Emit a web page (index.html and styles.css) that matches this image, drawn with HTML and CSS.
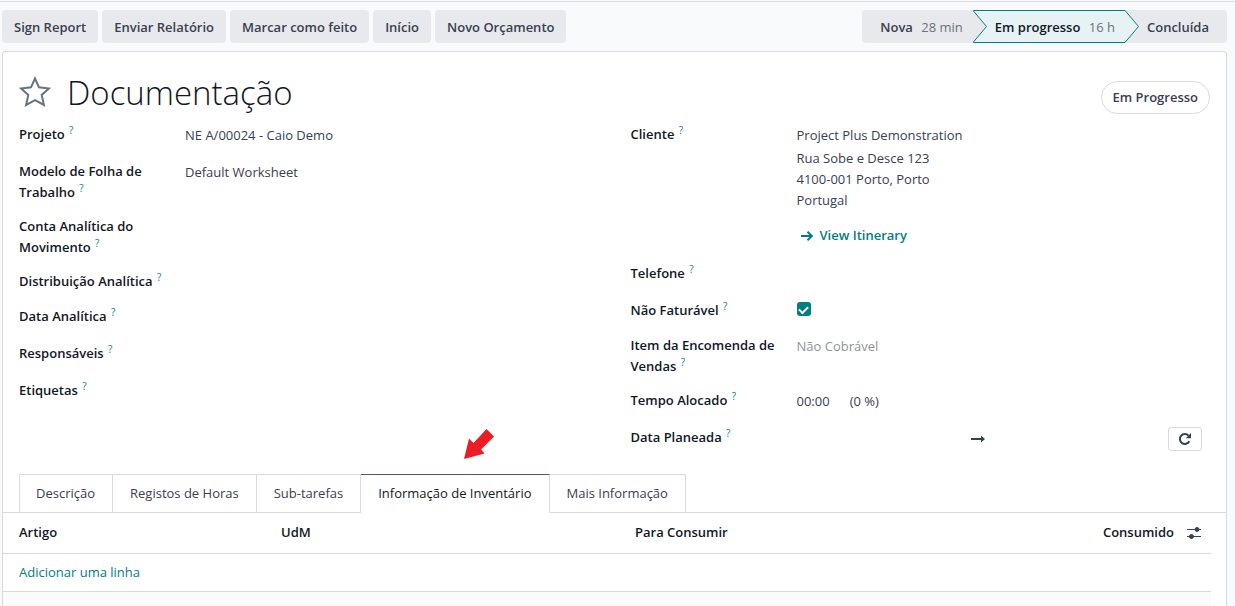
FILE: index.html
```html
<!DOCTYPE html>
<html lang="pt">
<head>
<meta charset="utf-8">
<title>Documentação</title>
<link rel="stylesheet" href="styles.css">
</head>
<body>
<header class="control-bar">
  <div class="actions">
    <button class="btn" type="button">Sign Report</button>
    <button class="btn" type="button">Enviar Relatório</button>
    <button class="btn" type="button">Marcar como feito</button>
    <button class="btn" type="button">Início</button>
    <button class="btn" type="button">Novo Orçamento</button>
  </div>
  <div class="stages">
    <button class="stage stage-first" type="button">Nova <span class="stage-time">28 min</span></button>
    <button class="stage stage-current" type="button">
      <svg class="stage-edge" width="14" height="33" viewBox="0 0 14 33"><path class="edge-rest" d="M0 0 14 16.500 0 33Z"/><path class="edge-line" d="M0 .5 13.500 16.500 0 32.500"/></svg>
      Em progresso <span class="stage-time">16 h</span>
    </button>
    <button class="stage stage-last" type="button">
      <svg class="stage-edge" width="14" height="33" viewBox="0 0 14 33"><path class="edge-active" d="M0 0 14 16.500 0 33Z"/><path class="edge-line" d="M0 .5 13.500 16.500 0 32.500"/></svg>
      Concluída
    </button>
  </div>
</header>

<main class="sheet">
  <div class="title-row">
    <button class="star" type="button" aria-label="Favorito">
      <svg width="32" height="31" viewBox="0 0 32 31"><path d="M16 2.500 20 11.300 30 12.500 22.700 18.900 24.900 29 16 24.200 7.100 29 9.300 18.900 2 12.500 12 11.300Z"/></svg>
    </button>
    <h1 class="title">Documentação</h1>
    <button class="state" type="button">Em Progresso</button>
  </div>

  <div class="groups">
    <div class="group">
      <div class="field"><div class="label">Projeto <sup>?</sup></div><div class="value">NE A/00024 - Caio Demo</div></div>
      <div class="field"><div class="label">Modelo de Folha de Trabalho <sup>?</sup></div><div class="value">Default Worksheet</div></div>
      <div class="field"><div class="label">Conta Analítica do Movimento <sup>?</sup></div></div>
      <div class="field field-compact"><div class="label">Distribuição Analítica <sup>?</sup></div></div>
      <div class="field"><div class="label">Data Analítica <sup>?</sup></div></div>
      <div class="field"><div class="label">Responsáveis <sup>?</sup></div></div>
      <div class="field"><div class="label">Etiquetas <sup>?</sup></div></div>
    </div>
    <div class="group">
      <div class="field">
        <div class="label">Cliente <sup>?</sup></div>
        <div class="value">
          <div class="partner">Project Plus Demonstration</div>
          <div>Rua Sobe e Desce 123</div>
          <div>4100-001 Porto, Porto</div>
          <div>Portugal</div>
          <a class="itinerary" href="#"><svg width="12" height="10" viewBox="0 0 12 10"><path d="M0 5H11M6.500 .8 10.800 5 6.500 9.200"/></svg>View Itinerary</a>
        </div>
      </div>
      <div class="field"><div class="label">Telefone <sup>?</sup></div></div>
      <div class="field field-compact"><label class="label" for="billable">Não Faturável <sup>?</sup></label><div class="value"><input class="check" id="billable" type="checkbox" checked></div></div>
      <div class="field"><div class="label">Item da Encomenda de Vendas <sup>?</sup></div><div class="value muted">Não Cobrável</div></div>
      <div class="field"><div class="label">Tempo Alocado <sup>?</sup></div><div class="value time"><span>00:00</span><span>(0 %)</span></div></div>
      <div class="field">
        <div class="label">Data Planeada <sup>?</sup></div>
        <div class="value dates">
          <svg class="range" width="14" height="8" viewBox="0 0 14 8"><path d="M0 3H10V.5L14 4 10 7.500V5H0Z"/></svg>
          <button class="reload" type="button" aria-label="Atualizar"><svg width="14" height="14" viewBox="0 0 14 14"><path class="arc" d="M11.300 9.300A5 5 0 1 1 10.600 3.600"/><path class="tip" d="M13 1V6.200H7.800Z"/></svg></button>
        </div>
      </div>
    </div>
    <svg class="pointer" width="32" height="32" viewBox="0 0 32 32"><path d="M1 31 6 10.500 10.500 15 23.500 1 31 8.500 18 21.500 21.500 25.500Z"/></svg>
  </div>

  <nav class="tabs">
    <button class="tab" type="button">Descrição</button>
    <button class="tab" type="button">Registos de Horas</button>
    <button class="tab" type="button">Sub-tarefas</button>
    <button class="tab tab-active" type="button">Informação de Inventário</button>
    <button class="tab" type="button">Mais Informação</button>
  </nav>

  <div class="list">
    <table class="lines">
      <thead>
        <tr>
          <th class="col-product">Artigo</th>
          <th class="col-unit">UdM</th>
          <th class="col-plan">Para Consumir</th>
          <th class="col-done">Consumido</th>
          <th class="col-options"><button class="options" type="button" aria-label="Colunas"><svg width="14" height="12" viewBox="0 0 14 12"><path d="M0 2.500H14M0 9.500H14"/><circle cx="10" cy="2.500" r="2"/><circle cx="4.500" cy="9.500" r="2"/></svg></button></th>
        </tr>
      </thead>
      <tbody>
        <tr><td colspan="5"><a class="add" href="#">Adicionar uma linha</a></td></tr>
      </tbody>
    </table>
    <div class="list-rest"></div>
  </div>
</main>
</body>
</html>
```

FILE: styles.css
```css
* { box-sizing: border-box; }

body {
  margin: 0;
  min-height: 100vh;
  display: flex;
  flex-direction: column;
  overflow: hidden;
  background: #f9fafb;
  color: #374151;
  font: 13px/21px "Open Sans", "Noto Sans", sans-serif;
}

button {
  font: inherit;
  color: inherit;
  border: 0;
  padding: 0;
  background: none;
  white-space: nowrap;
}

a { color: #017e84; text-decoration: none; }
svg { display: block; }

.control-bar {
  display: flex;
  justify-content: space-between;
  margin-top: 1px;
  padding: 8px 8px 8px 2px;
  border-top: 1px solid #d8dadd;
}

.actions { display: flex; gap: 4px; }

.btn {
  height: 33px;
  padding: 1px 12px 0;
  border-radius: 4px;
  background: #e7e9ed;
  font-weight: 600;
}

.stages { display: flex; font-weight: 600; }

.stage {
  position: relative;
  height: 33px;
  background: #e7e9ed;
  font-weight: 600;
}

.stage-first { padding: 1px 10px 0 18px; border-radius: 4px 0 0 4px; }

.stage-current {
  padding: 1px 10px 0 22px;
  border: solid #017e84;
  border-width: 1px 0;
  background: #e6f2f3;
  color: #111827;
}

.stage-last { padding: 1px 18px 0 22px; border-radius: 0 4px 4px 0; }
.stage-time { margin-left: 5px; color: #6b7280; font-weight: 400; }
.stage-edge { position: absolute; left: 0; top: 0; }
.stage-current .stage-edge { top: -1px; }
.edge-rest { fill: #e7e9ed; }
.edge-active { fill: #e6f2f3; }
.edge-line { fill: none; stroke: #017e84; }

.sheet {
  flex: 1;
  display: flex;
  flex-direction: column;
  margin: 0 8px 0 2px;
  border: 1px solid #d8dadd;
  border-bottom: 0;
  border-radius: 4px 4px 0 0;
  background: #fff;
}

.title-row {
  display: flex;
  align-items: center;
  height: 72px;
  padding: 10px 16px 0;
}

.star { width: 32px; margin: 0 16px 4px 0; }
.star svg { fill: none; stroke: #6b7280; stroke-width: 2; }
.title { margin: 0; color: #111827; font-size: 33px; font-weight: 300; line-height: 42px; }

.state {
  height: 33px;
  margin: 8px 0 0 auto;
  padding: 0 11px;
  border: 1px solid #d8dadd;
  border-radius: 17px;
  font-weight: 600;
}

.groups {
  position: relative;
  display: grid;
  grid-template-columns: 1fr 1fr;
  gap: 32px;
  padding: 0 16px;
}

.group { display: flex; flex-direction: column; gap: 13px; }

.field {
  display: grid;
  grid-template-columns: 150px 1fr;
  column-gap: 16px;
  min-height: 24px;
}

.field-compact { min-height: 22px; }
.label { color: #111827; font-weight: 600; }
sup { margin-left: 1px; color: #0180a5; font-size: 10px; font-weight: 400; line-height: 0; }
.value { padding-top: 1px; }
.partner { margin-bottom: 2px; }

.itinerary {
  display: flex;
  align-items: center;
  gap: 7px;
  margin: 14px 0 4px 4px;
  font-weight: 600;
}

.itinerary svg { fill: none; stroke: #017e84; stroke-width: 2; }

.check {
  appearance: none;
  display: block;
  width: 14px;
  height: 14px;
  margin: 1px 0;
  border-radius: 3px;
  background: #017e84;
}

.check::after {
  content: "";
  display: block;
  width: 7px;
  height: 4px;
  margin: 4px auto;
  border: solid #fff;
  border-width: 0 0 2px 2px;
  transform: rotate(-45deg);
}

.muted { color: #8f949d; }
.time { display: flex; gap: 20px; }
.dates { display: flex; align-items: center; justify-content: space-between; padding: 0 8px 0 174px; }
.range { fill: #374151; }

.reload {
  display: grid;
  place-items: center;
  width: 34px;
  height: 24px;
  border: 1px solid #d8dadd;
  border-radius: 3px;
}

.arc { fill: none; stroke: #374151; stroke-width: 2; }
.tip { fill: #374151; }

.pointer { position: absolute; left: 460px; top: 304px; fill: #ed1c24; }

.tabs {
  display: flex;
  margin-top: 23px;
  padding-left: 16px;
  border-bottom: 1px solid #d8dadd;
}

.tab {
  height: 39px;
  margin-bottom: -1px;
  padding: 0 17px;
  border: 1px solid #d8dadd;
  border-left-width: 0;
}

.tab:first-child { padding-left: 16px; border-left-width: 1px; }

.tab-active {
  border-top-color: #714b67;
  border-bottom-color: #fff;
  background: #fff;
  color: #111827;
}

.list {
  flex: 1;
  display: flex;
  flex-direction: column;
  padding-right: 15px;
}

.list-rest { flex: 1; background: #fbfbfb; }
.lines { width: 100%; border-collapse: collapse; table-layout: fixed; }
th, td { padding: 0; text-align: left; border-bottom: 1px solid #d8dadd; }
th { height: 40px; color: #111827; font-weight: 600; }
td { height: 38px; }
th:first-child, td:first-child { padding-left: 16px; }
.col-product { width: 278px; }
.col-unit { width: 354px; }
th.col-done { text-align: right; }
.col-options { width: 37px; }
.options { display: block; margin-left: 13px; }
.options svg { fill: #374151; stroke: #374151; stroke-width: 1; }
```
